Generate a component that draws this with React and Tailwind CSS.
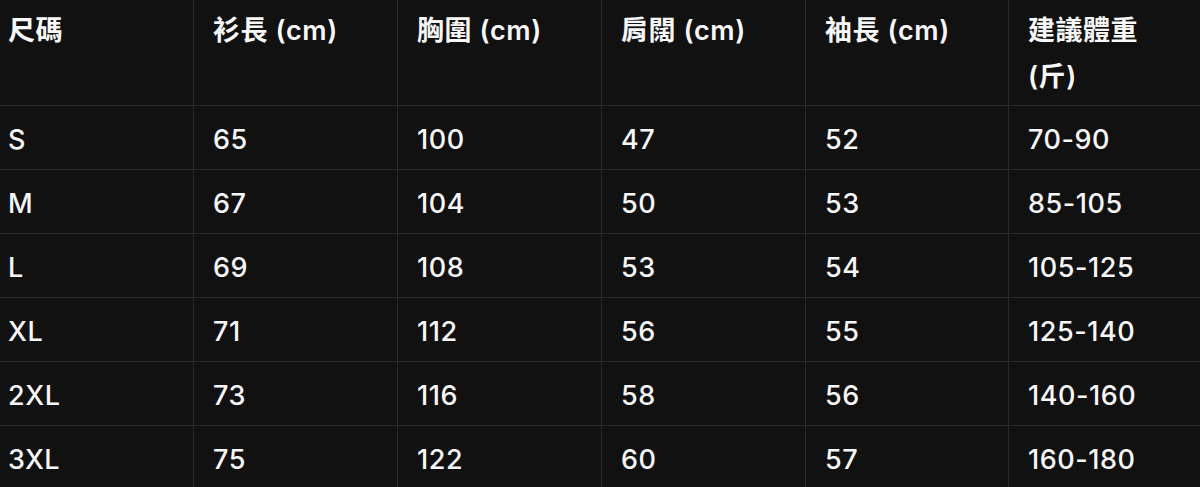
import React from "react";

const headers = ["尺碼", "衫長 (cm)", "胸圍 (cm)", "肩闊 (cm)", "袖長 (cm)", "建議體重 (斤)"];

const rows = [
  ["S", "65", "100", "47", "52", "70-90"],
  ["M", "67", "104", "50", "53", "85-105"],
  ["L", "69", "108", "53", "54", "105-125"],
  ["XL", "71", "112", "56", "55", "125-140"],
  ["2XL", "73", "116", "58", "56", "140-160"],
  ["3XL", "75", "122", "60", "57", "160-180"],
];

const grid = "grid grid-cols-[193px_204px_204px_204px_203px_1fr]";

const App = () => {
  return (
    <div
      className="w-[1200px] h-[487px] overflow-hidden bg-[#111111] text-[#f7f7f7]"
      style={{ fontFamily: 'Inter, "Noto Sans CJK TC", sans-serif' }}
    >
      {/* Header */}
      <div className={`${grid} h-[106px] border-b border-[#2a2a2a]`}>
        {headers.map((h, i) => (
          <div
            key={h}
            className={`pt-[8px] text-[27px] leading-[46px] tracking-[0.02em] font-semibold ${
              i === 0 ? "pl-[8px]" : "pl-[19px] pr-[30px] border-l border-[#2a2a2a]"
            }`}
          >
            {h}
          </div>
        ))}
      </div>

      {/* Rows */}
      {rows.map((r) => (
        <div key={r[0]} className={`${grid} h-[64px] border-b border-[#2a2a2a]`}>
          {r.map((c, i) => (
            <div
              key={i}
              className={`flex items-center pt-[5px] text-[27px] tracking-[0.02em] font-medium ${
                i === 0 ? "pl-[8px]" : "pl-[19px] border-l border-[#2a2a2a]"
              }`}
            >
              {c}
            </div>
          ))}
        </div>
      ))}
    </div>
  );
};

export default App;
